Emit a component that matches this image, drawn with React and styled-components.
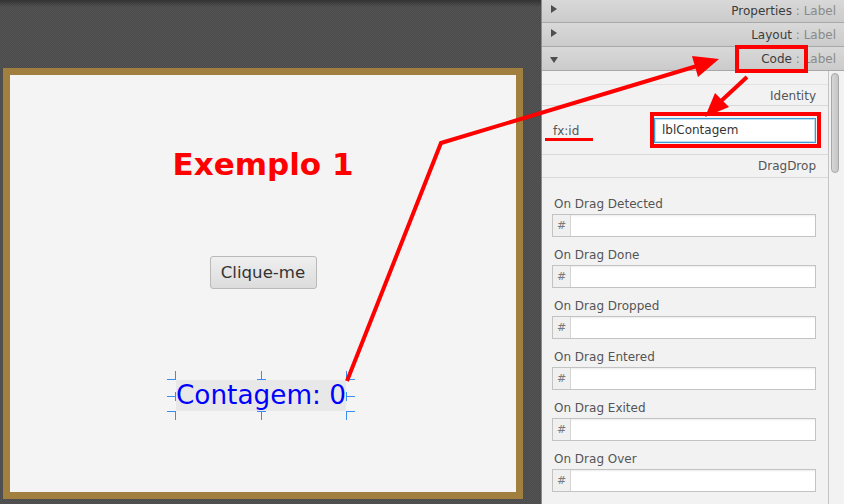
import React from "react";
import styled, { createGlobalStyle } from "styled-components";

const GlobalStyle = createGlobalStyle`
  html, body {
    margin: 0;
    padding: 0;
  }
  body {
    width: 844px;
    height: 504px;
    overflow: hidden;
    font-family: "DejaVu Sans", Verdana, sans-serif;
  }
`;

const Page = styled.div`
  position: relative;
  display: flex;
  width: 844px;
  height: 504px;
  overflow: hidden;
`;

const Stage = styled.div`
  width: 541px;
  flex-shrink: 0;
  box-sizing: border-box;
  padding: 68px 0 0 3px;
  background:
    linear-gradient(#333333, rgba(60, 60, 60, 0) 7px),
    repeating-conic-gradient(#4a4a4a 0 25%, #545454 0 50%) 0 0 / 2px 2px;
`;

const Canvas = styled.div`
  width: 520px;
  height: 431px;
  box-sizing: border-box;
  border: 7px solid #a1803f;
  background: #f4f4f4;
  display: flex;
  flex-direction: column;
  align-items: center;
`;

const Title = styled.h1`
  margin: 72px 0 0;
  font-size: 31px;
  line-height: 35px;
  font-weight: bold;
  color: #ff0000;
`;

const Button = styled.button`
  margin-top: 74px;
  width: 107px;
  height: 33px;
  padding: 0;
  border: 1px solid #b9b9b9;
  border-radius: 3px;
  background: linear-gradient(#efefef, #dcdcdc);
  font-family: inherit;
  font-size: 16.6px;
  color: #333;
`;

const LabelBox = styled.div`
  position: relative;
  width: 170px;
  margin: 91px 4px 0 0;
  background: #e8e8e8;
  text-align: center;
  font-size: 26.3px;
  line-height: 31px;
  color: #0000ff;
  white-space: nowrap;
`;

// selection handle strokes drawn round the selected label
const Tick = styled.span`
  position: absolute;
  left: ${(p) => p.$l};
  top: ${(p) => p.$t};
  width: ${(p) => (p.$v ? 1 : 9)}px;
  height: ${(p) => (p.$v ? 9 : 1)}px;
  background: #3a8cf0;
`;

const ticks = [
  // top-left
  { l: "-9px", t: "-1px" },
  { l: "-1px", t: "-9px", v: true },
  // top-middle
  { l: "50%", t: "-9px", v: true },
  { l: "calc(50% - 4px)", t: "-1px" },
  // top-right
  { l: "100%", t: "-1px" },
  { l: "100%", t: "-9px", v: true },
  // middle-left
  { l: "-9px", t: "50%" },
  { l: "-1px", t: "calc(50% - 4px)", v: true },
  // middle-right
  { l: "100%", t: "50%" },
  { l: "100%", t: "calc(50% - 4px)", v: true },
  // bottom-left
  { l: "-9px", t: "100%" },
  { l: "-1px", t: "100%", v: true },
  // bottom-middle
  { l: "50%", t: "100%", v: true },
  { l: "calc(50% - 4px)", t: "100%" },
  // bottom-right
  { l: "100%", t: "100%" },
  { l: "100%", t: "100%", v: true },
];

const Inspector = styled.div`
  flex: 1;
  display: flex;
  flex-direction: column;
  background: #f2f2f2;
  border-left: 1px solid #8c8c8c;
  margin-top: -1px;
`;

const PaneHeader = styled.div`
  height: 24px;
  flex-shrink: 0;
  box-sizing: border-box;
  display: flex;
  align-items: center;
  padding: 1px 8px 0 8px;
  border-bottom: 1px solid #a8a8a8;
  background: linear-gradient(#d9d9d9, #cbcbcb);
  font-size: 12px;
  color: #3c3c3c;
`;

const Arrow = styled.span`
  width: 0;
  height: 0;
  ${(p) =>
    p.$open
      ? `border-top: 6px solid #4e4e4e;
         border-left: 4px solid transparent;
         border-right: 4px solid transparent;
         margin-top: 2px;`
      : `border-left: 6px solid #4e4e4e;
         border-top: 4px solid transparent;
         border-bottom: 4px solid transparent;
         margin-top: -5px;
         margin-left: 1px;`}
`;

const PaneTitle = styled.span`
  margin-left: auto;
  white-space: pre;
`;

const Muted = styled.span`
  color: #8a8a8a;
`;

const Body = styled.div`
  flex: 1;
  display: flex;
  min-height: 0;
`;

const Content = styled.div`
  flex: 1;
  padding-top: 13px;
`;

const Section = styled.div`
  height: ${(p) => (p.$first ? 22 : 23)}px;
  box-sizing: border-box;
  border-top: ${(p) => (p.$first ? "1px solid #e2e2e2" : "none")};
  border-bottom: 1px solid #d9d9d9;
  padding: 1px 12px 0 0;
  text-align: right;
  font-size: 12px;
  line-height: 21px;
  color: #555;
`;

const IdRow = styled.div`
  height: 49px;
  box-sizing: border-box;
  display: flex;
  align-items: center;
  justify-content: space-between;
  padding: 1px 12px 0 11px;
  border-bottom: 1px solid #d9d9d9;
  font-size: 12px;
  color: #555;
`;

const IdInput = styled.div`
  width: 162px;
  height: 25px;
  box-sizing: border-box;
  padding-left: 7px;
  border: 1px solid #3d9bd4;
  box-shadow: inset 0 0 0 1px #bfe0f2;
  background: #fff;
  font-size: 12px;
  line-height: 23px;
  color: #333;
`;

const EventList = styled.div`
  display: flex;
  flex-direction: column;
  gap: 11px;
  padding: 19px 12px 0 10px;
`;

const Event = styled.div`
  display: flex;
  flex-direction: column;
  gap: 2px;
`;

const EventName = styled.span`
  padding-left: 2px;
  font-size: 12px;
  line-height: 15px;
  color: #555;
`;

const HandlerField = styled.div`
  display: flex;
  height: 23px;
  box-sizing: border-box;
  border: 1px solid #c3c3c3;
  background: #fff;
  box-shadow: inset 0 2px 2px -1px rgba(0, 0, 0, 0.08);
`;

const Hash = styled.span`
  width: 17px;
  border-right: 1px solid #d4d4d4;
  background: #f0f0f0;
  text-align: center;
  font-size: 11px;
  line-height: 21px;
  color: #7a7a7a;
`;

const ScrollTrack = styled.div`
  width: 13px;
  border-left: 1px solid #c4c4c4;
  padding: 2px 0 0 2px;
`;

const Thumb = styled.div`
  width: 8px;
  height: 100px;
  box-sizing: border-box;
  border: 1px solid #a8a8a8;
  border-radius: 4px;
  background: linear-gradient(90deg, #d6d6d6, #c6c6c6);
`;

const Overlay = styled.svg`
  position: absolute;
  left: 0;
  top: 0;
  width: 844px;
  height: 504px;
  pointer-events: none;
`;

const events = [
  "On Drag Detected",
  "On Drag Done",
  "On Drag Dropped",
  "On Drag Entered",
  "On Drag Exited",
  "On Drag Over",
];

const panes = [
  { name: "Properties", open: false },
  { name: "Layout", open: false },
  { name: "Code", open: true },
];

export default function App() {
  return (
    <Page>
      <GlobalStyle />
      <Stage>
        <Canvas>
          <Title>Exemplo 1</Title>
          <Button>Clique-me</Button>
          <LabelBox>
            Contagem: 0
            {ticks.map((t, i) => (
              <Tick key={i} $l={t.l} $t={t.t} $v={t.v} />
            ))}
          </LabelBox>
        </Canvas>
      </Stage>

      <Inspector>
        {panes.map((p) => (
          <PaneHeader key={p.name}>
            <Arrow $open={p.open} />
            <PaneTitle>
              {p.name}
              <Muted> : Label</Muted>
            </PaneTitle>
          </PaneHeader>
        ))}
        <Body>
          <Content>
            <Section $first>Identity</Section>
            <IdRow>
              <span>fx:id</span>
              <IdInput>lblContagem</IdInput>
            </IdRow>
            <Section>DragDrop</Section>
            <EventList>
              {events.map((e) => (
                <Event key={e}>
                  <EventName>{e}</EventName>
                  <HandlerField>
                    <Hash>#</Hash>
                  </HandlerField>
                </Event>
              ))}
            </EventList>
          </Content>
          <ScrollTrack>
            <Thumb />
          </ScrollTrack>
        </Body>
      </Inspector>

      <Overlay viewBox="0 0 844 504">
        <g fill="none" stroke="#ff0000" strokeWidth="4">
          <rect x="737" y="47" width="69" height="24" />
          <rect x="652" y="114" width="167" height="32" />
          <polyline points="347,381 441,143 697,66" />
          <line x1="747" y1="77" x2="720" y2="102" />
        </g>
        <path fill="#ff0000" d="M719 59 L692 56 L698 77 Z" />
        <path fill="#ff0000" d="M705 117 L715 93 L729 107 Z" />
        <rect x="545" y="138" width="48" height="3" fill="#ff0000" />
      </Overlay>
    </Page>
  );
}
